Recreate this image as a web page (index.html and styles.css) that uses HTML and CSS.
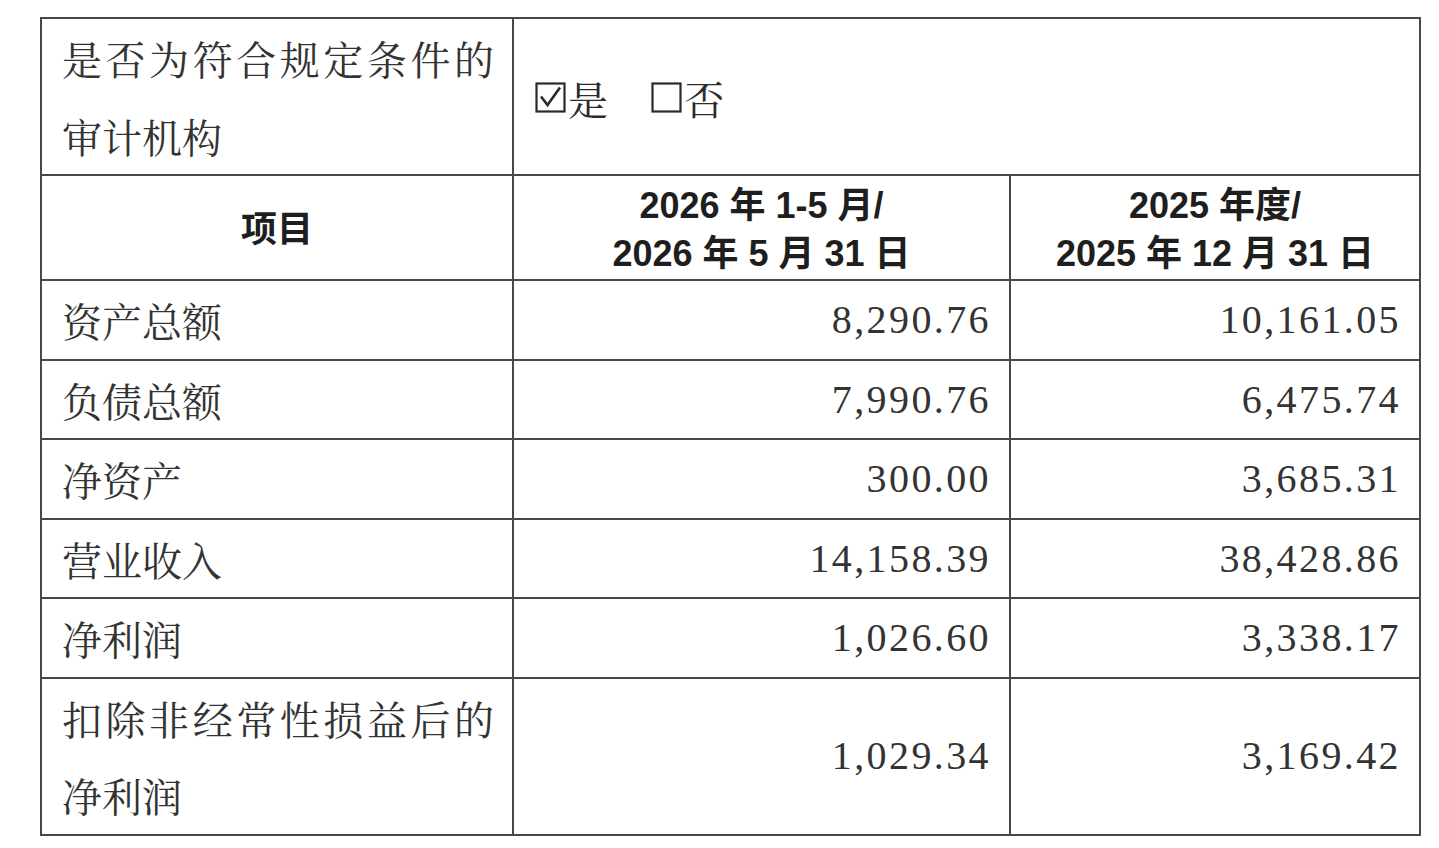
FILE: index.html
```html
<!DOCTYPE html>
<html lang="zh-CN">
<head>
<meta charset="utf-8">
<title>审计机构与财务数据</title>
<link rel="stylesheet" href="styles.css">
</head>
<body>
<table class="info">
  <colgroup>
    <col class="c1">
    <col class="c2">
    <col class="c3">
  </colgroup>
  <tbody>
    <tr>
      <td class="label">是否为符合规定条件的审计机构</td>
      <td colspan="2" class="check">
        <span class="opt"><svg class="box" width="31" height="31" viewBox="0 0 31 31"><rect x="1.5" y="1.5" width="28" height="28" fill="none" stroke="#2a2a2a" stroke-width="2.2"/><path d="M6 14.5 L12.5 23 L25 5.5" fill="none" stroke="#2a2a2a" stroke-width="2.6"/></svg>是</span>
        <span class="opt"><svg class="box" width="31" height="31" viewBox="0 0 31 31"><rect x="1.5" y="1.5" width="28" height="28" fill="none" stroke="#2a2a2a" stroke-width="2.2"/></svg>否</span>
      </td>
    </tr>
    <tr class="head">
      <th>项目</th>
      <th>2026 年 1-5 月/<br>2026 年 5 月 31 日</th>
      <th>2025 年度/<br>2025 年 12 月 31 日</th>
    </tr>
    <tr>
      <td class="label">资产总额</td>
      <td class="num">8,290.76</td>
      <td class="num">10,161.05</td>
    </tr>
    <tr>
      <td class="label">负债总额</td>
      <td class="num">7,990.76</td>
      <td class="num">6,475.74</td>
    </tr>
    <tr>
      <td class="label">净资产</td>
      <td class="num">300.00</td>
      <td class="num">3,685.31</td>
    </tr>
    <tr>
      <td class="label">营业收入</td>
      <td class="num">14,158.39</td>
      <td class="num">38,428.86</td>
    </tr>
    <tr>
      <td class="label">净利润</td>
      <td class="num">1,026.60</td>
      <td class="num">3,338.17</td>
    </tr>
    <tr>
      <td class="label">扣除非经常性损益后的净利润</td>
      <td class="num">1,029.34</td>
      <td class="num">3,169.42</td>
    </tr>
  </tbody>
</table>
</body>
</html>
```

FILE: styles.css
```css
html, body {
  margin: 0;
  padding: 0;
  background: #ffffff;
}

body {
  padding: 17px 0 0 40px;
  color: #2b2b2b;
  font-family: "Noto Serif CJK SC", "Noto Sans CJK SC", sans-serif;
}

.info {
  border-collapse: collapse;
  table-layout: fixed;
  width: 1381px;
}

.c1 { width: 472px; }
.c2 { width: 497px; }
.c3 { width: 410px; }

.info td,
.info th {
  border: 2px solid #484848;
  padding: 0;
  vertical-align: middle;
}

.label {
  font-size: 40px;
  line-height: 77.5px;
  padding: 0 18px 0 20px !important;
  text-align: justify;
  text-align-last: left;
  color: #333333;
}

.check {
  font-size: 40px;
  line-height: 77.5px;
  padding-left: 21px !important;
  color: #2b2b2b;
}

.opt {
  display: inline-flex;
  align-items: center;
  margin-right: 33px;
}

.box {
  display: block;
  margin-right: 2px;
}

.head th {
  font-family: "Liberation Sans", "Noto Sans CJK SC", sans-serif;
  font-weight: 700;
  font-size: 36px;
  line-height: 48px;
  padding: 6px 0 1px !important;
  text-align: center;
  color: #1e1e1e;
}

.num {
  font-family: "Liberation Serif", serif;
  font-size: 40px;
  line-height: 77.5px;
  letter-spacing: 2.4px;
  text-align: right;
  padding-right: 18px !important;
  color: #333333;
}
```
